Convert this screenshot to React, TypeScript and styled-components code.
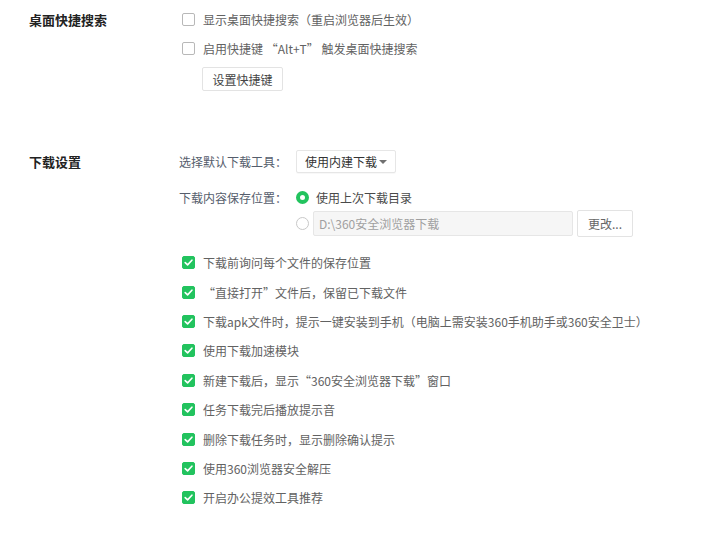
import React from "react";
import styled, { createGlobalStyle } from "styled-components";

const GlobalStyle = createGlobalStyle`
  body {
    margin: 0;
    background: #fff;
    font-family: "Noto Sans CJK SC", "Noto Sans", sans-serif;
  }
`;

const Page = styled.div`
  padding-top: 5px;
`;

const Section = styled.section<{ $gap?: number }>`
  display: grid;
  grid-template-columns: 182px 1fr;
  margin-top: ${(p) => p.$gap ?? 0}px;
`;

const Title = styled.div<{ $h: number }>`
  padding-left: 29px;
  height: ${(p) => p.$h}px;
  line-height: ${(p) => p.$h}px;
  font-size: 13px;
  font-weight: bold;
  color: #222;
`;

const Body = styled.div`
  display: flex;
  flex-direction: column;
`;

const CheckRow = styled.label<{ $h?: number }>`
  display: flex;
  align-items: center;
  gap: 8px;
  height: ${(p) => p.$h ?? 29}px;
  font-size: 12px;
  color: #626262;
  white-space: nowrap;
`;

const Box = styled.span<{ $on?: boolean }>`
  width: 13px;
  height: 13px;
  box-sizing: border-box;
  border-radius: 2px;
  border: 1px solid ${(p) => (p.$on ? "#22c35e" : "#b8b8b8")};
  background: ${(p) => (p.$on ? "#22c35e" : "#fff")};
  display: flex;
  align-items: center;
  justify-content: center;
  flex: none;
`;

const Button = styled.button`
  font-family: inherit;
  font-size: 12px;
  color: #444;
  background: #fff;
  border: 1px solid #e3e3e3;
  border-radius: 2px;
  box-sizing: border-box;
  padding: 0;
`;

const ShortcutButton = styled(Button)`
  margin-top: 4px;
  margin-left: 20px;
  width: 81px;
  height: 24px;
`;

const FieldRow = styled.div<{ $top?: number; $h?: number }>`
  display: flex;
  align-items: center;
  margin-top: ${(p) => p.$top ?? 0}px;
  height: ${(p) => (p.$h ? `${p.$h}px` : "auto")};
  font-size: 12px;
`;

const Label = styled.span`
  width: 117px;
  margin-left: -3px;
  color: #555d6c;
  white-space: nowrap;
`;

const Spacer = styled.span`
  width: 114px;
`;

const Select = styled.div`
  width: 100px;
  height: 23px;
  box-sizing: border-box;
  border: 1px solid #e6e6e6;
  border-radius: 2px;
  display: flex;
  align-items: center;
  justify-content: space-between;
  padding: 0 8px 0 8px;
  color: #333;
  box-shadow: 0 1px 1px rgba(0, 0, 0, 0.03);
`;

const Caret = styled.span`
  width: 0;
  height: 0;
  border-left: 4px solid transparent;
  border-right: 4px solid transparent;
  border-top: 4px solid #707070;
`;

const Radio = styled.span<{ $on?: boolean }>`
  width: 13px;
  height: 13px;
  box-sizing: border-box;
  border-radius: 50%;
  border: ${(p) => (p.$on ? "4px solid #22c35e" : "1px solid #c8c8c8")};
  background: #fff;
  flex: none;
`;

const RadioText = styled.span`
  margin-left: 7px;
  color: #4a4a4a;
`;

const PathInput = styled.div`
  margin-left: 4px;
  width: 260px;
  height: 25px;
  box-sizing: border-box;
  border: 1px solid #e6e6e6;
  border-radius: 2px;
  background: #f6f6f6;
  color: #a0a0a0;
  display: flex;
  align-items: center;
  padding-left: 5px;
`;

const ChangeButton = styled(Button)`
  margin-left: 4px;
  width: 56px;
  height: 27px;
  color: #666;
`;

const List = styled.div`
  margin-top: 11px;
  display: flex;
  flex-direction: column;
`;

const Tick = () => (
  <svg width="9" height="9" viewBox="0 0 9 9">
    <path d="M1.2 4.6 L3.6 6.9 L7.9 2.2" fill="none" stroke="#fff" strokeWidth="1.6" strokeLinecap="round" strokeLinejoin="round" />
  </svg>
);

const options = [
  "下载前询问每个文件的保存位置",
  " “直接打开”文件后，保留已下载文件",
  "下载apk文件时，提示一键安装到手机（电脑上需安装360手机助手或360安全卫士）",
  "使用下载加速模块",
  "新建下载后，显示“360安全浏览器下载”窗口",
  "任务下载完后播放提示音",
  "删除下载任务时，显示删除确认提示",
  "使用360浏览器安全解压",
  "开启办公提效工具推荐",
];

const App: React.FC = () => {
  return (
    <>
      <GlobalStyle />
      <Page>
        <Section>
          <Title $h={29}>桌面快捷搜索</Title>
          <Body>
            <CheckRow>
              <Box />
              显示桌面快捷搜索（重启浏览器后生效）
            </CheckRow>
            <CheckRow>
              <Box />
              启用快捷键 “Alt+T” 触发桌面快捷搜索
            </CheckRow>
            <div>
              <ShortcutButton>设置快捷键</ShortcutButton>
            </div>
          </Body>
        </Section>

        <Section $gap={59}>
          <Title $h={23}>下载设置</Title>
          <Body>
            <FieldRow>
              <Label>选择默认下载工具：</Label>
              <Select>
                使用内建下载
                <Caret />
              </Select>
            </FieldRow>
            <FieldRow $top={12} $h={24}>
              <Label>下载内容保存位置：</Label>
              <Radio $on />
              <RadioText>使用上次下载目录</RadioText>
            </FieldRow>
            <FieldRow $top={1}>
              <Spacer />
              <Radio />
              <PathInput>D:\360安全浏览器下载</PathInput>
              <ChangeButton>更改...</ChangeButton>
            </FieldRow>
            <List>
              {options.map((t) => (
                <CheckRow key={t} $h={29.4}>
                  <Box $on>
                    <Tick />
                  </Box>
                  {t}
                </CheckRow>
              ))}
            </List>
          </Body>
        </Section>
      </Page>
    </>
  );
};

export default App;
